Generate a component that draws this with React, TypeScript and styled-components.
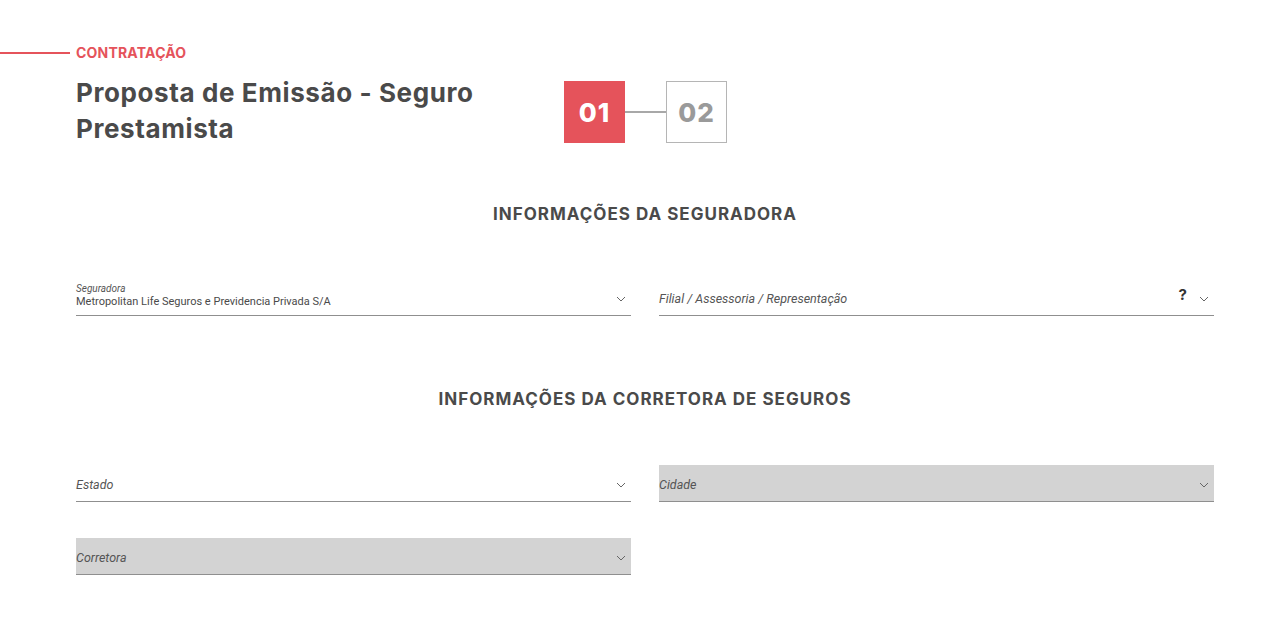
import React from "react";
import styled, { createGlobalStyle } from "styled-components";

const Global = createGlobalStyle`
  html, body { margin: 0; padding: 0; background: #fff; }
  body { font-family: Inter, sans-serif; color: #4a4a4a; }
  * { box-sizing: border-box; }
`;

const Page = styled.div`
  padding: 45px 59px 40px 76px;
  width: 1273px;
`;

const Eyebrow = styled.div`
  display: flex;
  align-items: center;
  gap: 6px;
  margin-left: -76px;
  height: 16px;
`;

const EyebrowLine = styled.span`
  display: block;
  width: 70px;
  height: 2px;
  background: #e5535b;
`;

const EyebrowText = styled.span`
  font-family: Inter, sans-serif;
  font-weight: 700;
  font-size: 14px;
  line-height: 16px;
  color: #e5535b;
  letter-spacing: 0.2px;
`;

const HeaderRow = styled.div`
  display: flex;
  align-items: flex-start;
  margin-top: 14px;
`;

const Title = styled.h1`
  margin: 0;
  width: 488px;
  padding-right: 6px;
  font-family: Inter, sans-serif;
  font-weight: 750;
  font-size: 26px;
  line-height: 36px;
  letter-spacing: 0.6px;
  color: #4a4a4a;
`;

const Steps = styled.div`
  display: flex;
  align-items: center;
  margin-top: 6px;
`;

const StepBox = styled.div<{ $active?: boolean }>`
  width: 61px;
  height: 62px;
  display: flex;
  align-items: center;
  justify-content: center;
  font-family: Inter, sans-serif;
  font-weight: 800;
  font-size: 26px;
  letter-spacing: 1px;
  background: ${(p) => (p.$active ? "#e5535b" : "#fff")};
  color: ${(p) => (p.$active ? "#fff" : "#9a9a9a")};
  border: ${(p) => (p.$active ? "none" : "1px solid #b5b5b5")};
`;

const StepLink = styled.span`
  display: block;
  width: 41px;
  height: 2px;
  background: #a8a8a8;
`;

const SectionTitle = styled.h2<{ $top: number }>`
  margin: ${(p) => p.$top}px 0 0;
  text-align: center;
  font-family: Inter, sans-serif;
  font-weight: 700;
  font-size: 17px;
  line-height: 24px;
  letter-spacing: 1px;
  color: #4a4a4a;
`;

const Grid = styled.div<{ $top: number }>`
  display: grid;
  grid-template-columns: 555px 555px;
  column-gap: 28px;
  row-gap: 36px;
  margin-top: ${(p) => p.$top}px;
`;

const Field = styled.div<{ $disabled?: boolean }>`
  height: 37px;
  border-bottom: 1px solid #8f8f8f;
  background: ${(p) => (p.$disabled ? "#d3d3d3" : "transparent")};
  display: flex;
  align-items: center;
  padding-right: 5px;
  font-family: Roboto, "Open Sans", sans-serif;
  color: #555;
`;

const FieldText = styled.div`
  flex: 1;
  display: flex;
  flex-direction: column;
  justify-content: center;
`;

const SmallLabel = styled.span`
  font-size: 10px;
  font-style: italic;
  line-height: 12px;
  color: #555;
  margin-top: -2px;
`;

const Value = styled.span`
  font-size: 11px;
  line-height: 14px;
  color: #4a4a4a;
`;

const Placeholder = styled.span`
  font-size: 12.5px;
  font-style: italic;
  color: #555;
  padding-top: 2px;
`;

const Help = styled.span`
  font-family: Inter, sans-serif;
  font-weight: 700;
  font-size: 15px;
  color: #333;
  margin-right: 12px;
  margin-top: -5px;
`;

const Chevron = () => (
  <svg width="10" height="6" viewBox="0 0 10 6" style={{ marginTop: 3 }}>
    <path d="M1 1 L5 5 L9 1" fill="none" stroke="#666" strokeWidth="1" />
  </svg>
);

export default function App() {
  return (
    <>
      <Global />
      <Page>
        <Eyebrow>
          <EyebrowLine />
          <EyebrowText>CONTRATAÇÃO</EyebrowText>
        </Eyebrow>
        <HeaderRow>
          <Title>Proposta de Emissão - Seguro Prestamista</Title>
          <Steps>
            <StepBox $active>01</StepBox>
            <StepLink />
            <StepBox>02</StepBox>
          </Steps>
        </HeaderRow>

        <SectionTitle $top={55}>INFORMAÇÕES DA SEGURADORA</SectionTitle>
        <Grid $top={53}>
          <Field>
            <FieldText>
              <SmallLabel>Seguradora</SmallLabel>
              <Value>Metropolitan Life Seguros e Previdencia Privada S/A</Value>
            </FieldText>
            <Chevron />
          </Field>
          <Field>
            <FieldText>
              <Placeholder>Filial / Assessoria / Representação</Placeholder>
            </FieldText>
            <Help>?</Help>
            <Chevron />
          </Field>
        </Grid>

        <SectionTitle $top={71}>INFORMAÇÕES DA CORRETORA DE SEGUROS</SectionTitle>
        <Grid $top={54}>
          <Field>
            <FieldText>
              <Placeholder>Estado</Placeholder>
            </FieldText>
            <Chevron />
          </Field>
          <Field $disabled>
            <FieldText>
              <Placeholder>Cidade</Placeholder>
            </FieldText>
            <Chevron />
          </Field>
          <Field $disabled>
            <FieldText>
              <Placeholder>Corretora</Placeholder>
            </FieldText>
            <Chevron />
          </Field>
        </Grid>
      </Page>
    </>
  );
}
